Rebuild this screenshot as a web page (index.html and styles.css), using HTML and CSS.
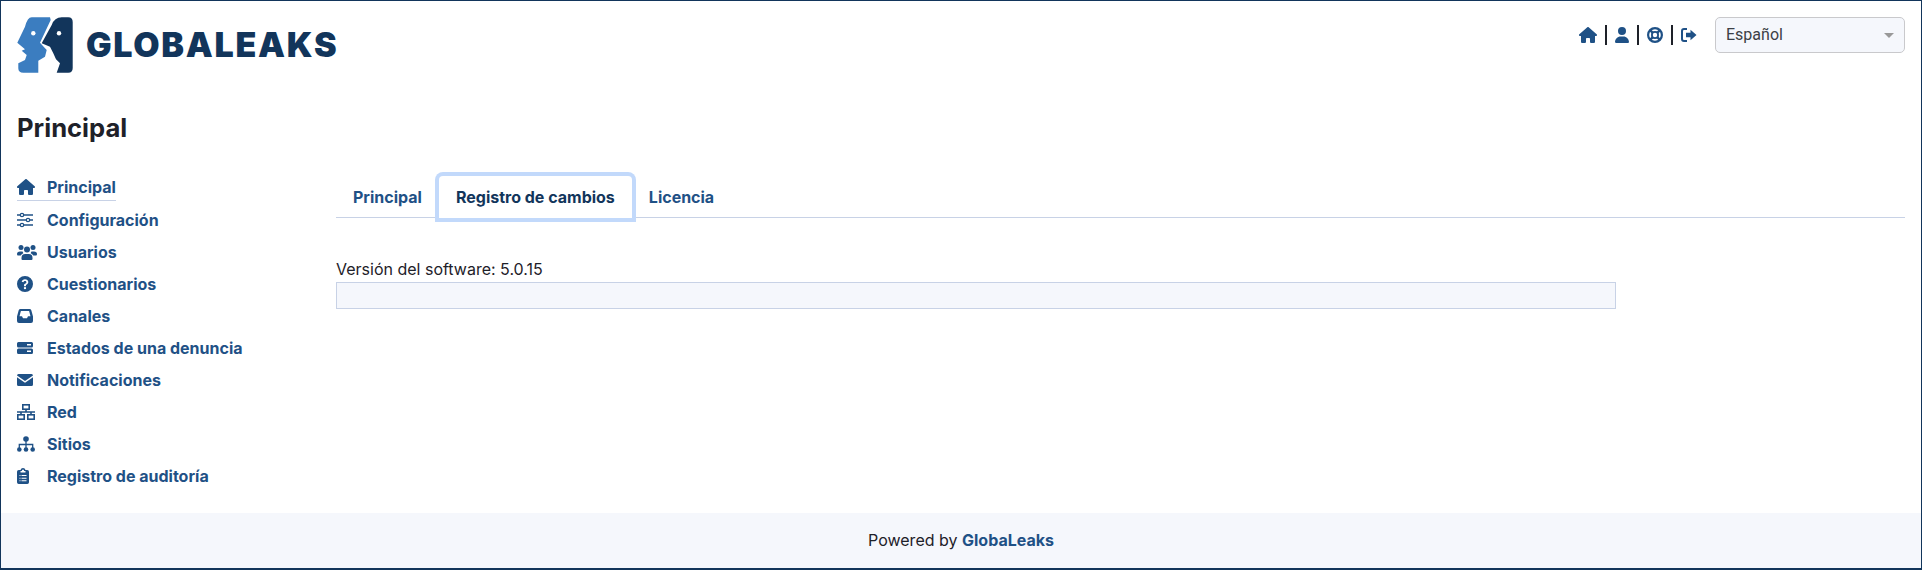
FILE: index.html
```html
<!DOCTYPE html>
<html lang="es">
<head>
<meta charset="utf-8">
<title>GlobaLeaks</title>
<link rel="stylesheet" href="styles.css">
</head>
<body>
<div class="page">
  <header class="header">
    <div class="brand">
      <svg class="logo" viewBox="0 0 56 56">
        <path fill="#3b7dc0" d="M14.700 .3H33L33.700 3 23 25.700 29.700 33 28 39.700 21.300 43.700V55.700H6.300Q1.300 55.700 1.300 51.300V46.300L8 43 9.700 38 4.700 33.700 8 32.300 .3 25.700 8 9.700Q10.500 .3 14.700 .3Z"/>
        <path fill="#12355b" d="M44.700 .3H51.300Q55.700 .3 55.700 5V51Q55.700 55.700 51.300 55.700H39.700L43 46.300 39 42.300 36.300 36.300 33 29.700 24.700 26.300 34.700 8Q37.500 .3 44.700 .3Z"/>
        <circle cx="16.300" cy="16.300" r="2.200" fill="#fff"/>
        <circle cx="42" cy="16.300" r="2.200" fill="#fff"/>
      </svg>
      <span class="wordmark">GLOBALEAKS</span>
    </div>
    <div class="tools">
      <div class="tool-links">
        <svg class="tool-icon home" viewBox="0 0 576 512"><path d="M575.800 255.500c0 18-15 32.100-32 32.100h-32l.7 160.200c0 2.700-.2 5.400-.5 8.100V472c0 22.100-17.900 40-40 40H392c-22.100 0-40-17.900-40-40V384c0-17.700-14.300-32-32-32H256c-17.700 0-32 14.300-32 32v88c0 22.100-17.900 40-40 40H104c-22.100 0-40-17.900-40-40V360c0-.9 0-1.900 .1-2.800V287.600H32c-18 0-32-14-32-32.100c0-9 3-17 10-24L266.400 8c7-7 15-8 22-8s15 2 21 7L564.800 231.500c8 7 12 15 11 24z"/></svg>
        <span class="sep"></span>
        <svg class="tool-icon user" viewBox="0 0 448 512"><path d="M224 256A128 128 0 1 0 224 0a128 128 0 1 0 0 256zm-45.700 48C79.800 304 0 383.800 0 482.300C0 498.700 13.300 512 29.700 512H418.300c16.400 0 29.700-13.300 29.700-29.700C448 383.800 368.200 304 269.700 304H178.300z"/></svg>
        <span class="sep"></span>
        <svg class="tool-icon" viewBox="0 0 16 16"><circle cx="8" cy="8" r="6.900" fill="none" stroke="currentColor" stroke-width="2.200"/><circle cx="8" cy="8" r="3.100" fill="none" stroke="currentColor" stroke-width="1.800"/><path d="M3.300 3.300 5.800 5.800M12.700 3.300 10.200 5.800M3.300 12.700 5.800 10.200M12.700 12.700 10.200 10.200" stroke="currentColor" stroke-width="2.400"/></svg>
        <span class="sep"></span>
        <svg class="tool-icon" viewBox="0 0 16 16"><path d="M6 2H3Q1 2 1 4V12Q1 14 3 14H6" fill="none" stroke="currentColor" stroke-width="2"/><path d="M9.500 2.800 15.500 8 9.500 13.200V10.300H5V5.700H9.500Z"/></svg>
      </div>
      <div class="lang">
        <span>Español</span>
        <span class="caret"></span>
      </div>
    </div>
  </header>

  <h1 class="title">Principal</h1>

  <div class="body">
    <nav class="nav">
      <a class="nav-item current"><svg class="nav-icon wide" viewBox="0 0 576 512"><path d="M575.800 255.500c0 18-15 32.100-32 32.100h-32l.7 160.200c0 2.700-.2 5.400-.5 8.100V472c0 22.100-17.900 40-40 40H392c-22.100 0-40-17.900-40-40V384c0-17.700-14.300-32-32-32H256c-17.700 0-32 14.300-32 32v88c0 22.100-17.900 40-40 40H104c-22.100 0-40-17.900-40-40V360c0-.9 0-1.900 .1-2.800V287.600H32c-18 0-32-14-32-32.100c0-9 3-17 10-24L266.400 8c7-7 15-8 22-8s15 2 21 7L564.800 231.500c8 7 12 15 11 24z"/></svg><span>Principal</span></a>
      <a class="nav-item"><svg class="nav-icon" viewBox="0 0 16 16"><path d="M0 3H16M0 8H16M0 13H16" stroke="currentColor" stroke-width="1.300"/><circle cx="5" cy="3" r="1.700" fill="#fff" stroke="currentColor" stroke-width="1.200"/><circle cx="11" cy="8" r="1.700" fill="#fff" stroke="currentColor" stroke-width="1.200"/><circle cx="5" cy="13" r="1.700" fill="#fff" stroke="currentColor" stroke-width="1.200"/></svg><span>Configuración</span></a>
      <a class="nav-item"><svg class="nav-icon users" viewBox="0 0 20 16"><circle cx="4" cy="3.500" r="2.500"/><circle cx="16" cy="3.500" r="2.500"/><circle cx="10" cy="5.500" r="3"/><path d="M0 10Q0 7.500 3 7.500H5.500Q6 8 6.300 9.300Q4.500 10 3.800 11.500H1Q0 11.500 0 10ZM20 10Q20 7.500 17 7.500H14.500Q14 8 13.700 9.300Q15.500 10 16.200 11.500H19Q20 11.500 20 10ZM4.500 14Q4.500 10 8 10H12Q15.500 10 15.500 14V15Q15.500 16 14.500 16H5.500Q4.500 16 4.500 15Z"/></svg><span>Usuarios</span></a>
      <a class="nav-item"><svg class="nav-icon" viewBox="0 0 16 16"><path fill-rule="evenodd" d="M8 0a8 8 0 1 0 0 16A8 8 0 0 0 8 0ZM7 10.200h2V9.100c1.300-.6 2.300-1.500 2.300-3C11.300 4.300 9.800 3.200 8 3.200 6.300 3.200 5 4.100 4.700 5.800L6.500 6.300C6.600 5.500 7.200 5 8 5c.8 0 1.400.5 1.400 1.200 0 .8-.7 1.200-1.400 1.500-.6.300-1 .6-1 1.300ZM8 13.300A1.200 1.200 0 1 0 8 10.900 1.200 1.200 0 0 0 8 13.300Z"/></svg><span>Cuestionarios</span></a>
      <a class="nav-item"><svg class="nav-icon" viewBox="0 0 16 16"><path fill-rule="evenodd" d="M3.500 1H12.500Q13.800 1 14.300 2.200L16 8.500V13Q16 15 14 15H2Q0 15 0 13V8.500L1.700 2.200Q2.200 1 3.500 1ZM3.900 3 2.500 8.300H5L6 10.300H10L11 8.300H13.500L12.100 3Z"/></svg><span>Canales</span></a>
      <a class="nav-item"><svg class="nav-icon" viewBox="0 0 16 16"><path fill-rule="evenodd" d="M1.500 2H14.500Q16 2 16 3.500V6Q16 7.500 14.500 7.500H1.500Q0 7.500 0 6V3.500Q0 2 1.500 2ZM10 4V5.400H14V4ZM1.500 8.500H14.500Q16 8.500 16 10V12.500Q16 14 14.500 14H1.500Q0 14 0 12.500V10Q0 8.500 1.500 8.500ZM10 10.600V12H14V10.600Z"/></svg><span>Estados de una denuncia</span></a>
      <a class="nav-item"><svg class="nav-icon" viewBox="0 0 16 16"><path d="M1.500 2H14.500Q16 2 16 3.500L8 9 0 3.500Q0 2 1.500 2ZM0 5.200 8 10.800 16 5.200V12.500Q16 14 14.500 14H1.500Q0 14 0 12.500Z"/></svg><span>Notificaciones</span></a>
      <a class="nav-item"><svg class="nav-icon wide" viewBox="0 0 18 16"><g fill="none" stroke="currentColor" stroke-width="1.600"><rect x="5.800" y=".8" width="6.400" height="4.400"/><rect x=".8" y="10.800" width="6.400" height="4.400"/><rect x="10.800" y="10.800" width="6.400" height="4.400"/><path d="M9 5.200V8M4 10.800V8H14V10.800M0 8H18"/></g></svg><span>Red</span></a>
      <a class="nav-item"><svg class="nav-icon wide" viewBox="0 0 18 16"><circle cx="9" cy="3" r="2.800"/><circle cx="2.300" cy="13.500" r="2.300"/><circle cx="9" cy="13.500" r="2.300"/><circle cx="15.700" cy="13.500" r="2.300"/><path d="M9 5V12M2.300 12V8.500H15.700V12" fill="none" stroke="currentColor" stroke-width="1.300"/></svg><span>Sitios</span></a>
      <a class="nav-item"><svg class="nav-icon clip" viewBox="0 0 12 16"><path fill-rule="evenodd" d="M1.700 2H3.500Q4 0 6 0T8.500 2H10.300Q12 2 12 3.700V14.300Q12 16 10.300 16H1.700Q0 16 0 14.300V3.700Q0 2 1.700 2ZM3.500 3V4.500H8.500V3H7.200Q7 1.500 6 1.500T4.800 3ZM2.500 7V8H3.500V7ZM4.500 7V8H9.500V7ZM2.500 9.700V10.700H3.500V9.700ZM4.500 9.700V10.700H9.500V9.700ZM2.500 12.300V13.300H3.500V12.300ZM4.500 12.300V13.300H9.500V12.300Z"/></svg><span>Registro de auditoría</span></a>
    </nav>
    <main class="main">
      <div class="tabs">
        <a class="tab">Principal</a>
        <a class="tab active">Registro de cambios</a>
        <a class="tab">Licencia</a>
      </div>
      <div class="version">Versión del software: 5.0.15</div>
      <div class="changelog"></div>
    </main>
  </div>

  <footer class="footer">Powered by <a class="footer-link">GlobaLeaks</a></footer>
</div>
</body>
</html>
```
FILE: styles.css
```css
* { box-sizing: border-box; }
html, body { margin: 0; padding: 0; }
body {
  font-family: Inter, "Noto Sans", sans-serif;
  font-size: 16px;
  line-height: 1.5;
  color: #1e2129;
  background: #fff;
}
.page {
  height: 570px;
  border: 1px solid #12355b;
  border-bottom-width: 2px;
  display: flex;
  flex-direction: column;
  overflow: hidden;
}
.header {
  display: flex;
  justify-content: space-between;
  padding: 16px 16px 0;
  height: 90px;
}
.brand { display: flex; align-items: flex-start; gap: 13px; }
.logo { width: 56px; height: 56px; display: block; }
.wordmark {
  font-family: Inter, sans-serif;
  font-weight: 900;
  font-size: 34px;
  line-height: 44px;
  margin-top: 6px;
  color: #12355b;
  letter-spacing: 1.700px;
}
.tools { display: flex; align-items: flex-start; gap: 18px; }
.tool-links {
  display: flex;
  align-items: center;
  gap: 8px;
  height: 20px;
  margin-top: 8px;
  color: #1f5186;
}
.tool-icon { height: 16px; width: 16px; fill: currentColor; display: block; }
.tool-icon.home { width: 18px; }
.tool-icon.user { width: 14px; }
.sep { width: 2px; height: 20px; background: #1e2129; }
.lang {
  width: 190px;
  height: 36px;
  display: flex;
  align-items: center;
  justify-content: space-between;
  padding: 0 10px;
  background: #f5f7fc;
  border: 1px solid #c9c9cc;
  border-radius: 5px;
  font-family: Roboto, sans-serif;
  font-size: 16px;
  color: #3c3f46;
}
.caret {
  width: 0;
  height: 0;
  border-left: 5px solid transparent;
  border-right: 5px solid transparent;
  border-top: 5px solid #999;
}
.title {
  margin: 0;
  padding: 18px 16px 0;
  font-size: 25.600px;
  font-weight: 700;
  line-height: 38px;
  height: 75px;
  color: #1e2129;
}
.body { display: flex; flex: 1; }
.nav {
  width: 335px;
  padding: 8px 16px 0;
  display: flex;
  flex-direction: column;
  align-items: flex-start;
  gap: 5.100px;
}
.nav-item {
  display: flex;
  align-items: center;
  height: 27px;
  color: #1f5186;
  font-weight: 670;
  white-space: nowrap;
}
.nav-item.current { border-bottom: 1px solid #c8d2e6; }
.nav-icon { width: 16px; height: 16px; fill: currentColor; margin-right: 14px; display: block; flex: none; }
.nav-icon.wide { width: 18px; margin-right: 12px; }
.nav-icon.users { width: 20px; margin-right: 10px; }
.nav-icon.clip { width: 12px; margin-right: 18px; }
.main { flex: 1; padding: 0 16px 0 0; }
.tabs {
  display: flex;
  align-items: flex-end;
  height: 47px;
  margin-top: 5px;
  border-bottom: 1px solid #c8d2e6;
}
.tab {
  height: 42px;
  padding: 0 17px;
  line-height: 42px;
  margin-bottom: -1px;
  color: #1f5186;
  font-weight: 670;
  white-space: nowrap;
}
.tab.active {
  position: relative;
  color: #12355b;
  border-radius: 4px 4px 0 0;
  background: #fff;
  box-shadow: 0 0 0 4px #c2d9fb;
}
.version { margin-top: 39px; height: 25px; line-height: 25px; }
.changelog {
  width: 1280px;
  height: 27px;
  background: #f5f7fc;
  border: 1px solid #c8d2e6;
}
.footer {
  height: 55px;
  line-height: 55px;
  background: #f5f7fc;
  text-align: center;
}
.footer-link { color: #1f5186; font-weight: 670; }
```
